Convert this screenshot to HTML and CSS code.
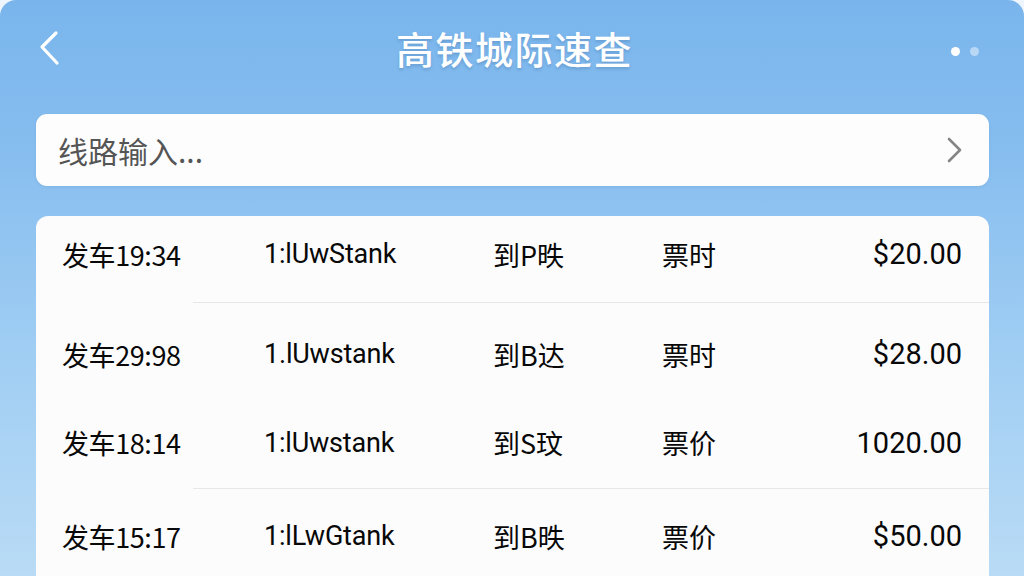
FILE: index.html
```html
<!DOCTYPE html>
<html lang="zh-CN">
<head>
<meta charset="utf-8">
<title>高铁城际速查</title>
<link rel="stylesheet" href="styles.css">
</head>
<body>
<div class="app">
  <header class="topbar">
    <svg class="back" width="24" height="36" viewBox="0 0 24 36"><path d="M18 3 L4 17 L19 33" fill="none" stroke="#fff" stroke-width="3.2" stroke-linecap="round" stroke-linejoin="round"/></svg>
    <h1 class="title">高铁城际速查</h1>
    <div class="dots"><span class="dot"></span><span class="dot dim"></span></div>
  </header>

  <div class="search">
    <span class="search-text">线路输入...</span>
    <svg class="chev" width="18" height="28" viewBox="0 0 18 28"><path d="M4 3 L15 14 L4 25" fill="none" stroke="#858585" stroke-width="2.6" stroke-linecap="round" stroke-linejoin="round"/></svg>
  </div>

  <div class="card">
    <div class="row r1">
      <span class="c1">发车19:34</span><span class="c2">1:lUwStank</span><span class="c3">到P昳</span><span class="c4">票时</span><span class="c5">$20.00</span>
    </div>
    <div class="divider"></div>
    <div class="row r2">
      <span class="c1">发车29:98</span><span class="c2">1.lUwstank</span><span class="c3">到B达</span><span class="c4">票时</span><span class="c5">$28.00</span>
    </div>
    <div class="row r3">
      <span class="c1">发车18:14</span><span class="c2">1:lUwstank</span><span class="c3">到S玟</span><span class="c4">票价</span><span class="c5">1020.00</span>
    </div>
    <div class="divider"></div>
    <div class="row r4">
      <span class="c1">发车15:17</span><span class="c2">1:lLwGtank</span><span class="c3">到B昳</span><span class="c4">票价</span><span class="c5">$50.00</span>
    </div>
  </div>
</div>
</body>
</html>
```
FILE: styles.css
```css
* { box-sizing: border-box; }
html, body { margin: 0; padding: 0; }
body {
  width: 1024px;
  height: 576px;
  overflow: hidden;
  background: #eef5fc;
  font-family: Roboto, "Noto Sans CJK SC", sans-serif;
}
.app {
  height: 576px;
  border-radius: 16px 16px 0 0;
  background: linear-gradient(180deg, #79b5ec 0%, #86bdef 25%, #9fcdf3 60%, #b9dbf5 100%);
  padding: 0 35px 0 36px;
  overflow: hidden;
}
.topbar {
  height: 94px;
  display: flex;
  align-items: center;
  justify-content: space-between;
}
.back { margin-left: 2px; margin-top: 2px; }
.title {
  margin: 0 0 0 16px;
  font-family: "Noto Sans CJK SC", sans-serif;
  font-weight: 500;
  font-size: 38px;
  color: #fff;
  letter-spacing: 1.5px;
  text-shadow: 0 2px 3px rgba(40, 80, 130, 0.25);
  flex: 1;
  text-align: center;
}
.dots { display: flex; gap: 10px; margin-right: 10px; margin-top: 8px; }
.dot { width: 9px; height: 9px; border-radius: 50%; background: #fff; }
.dot.dim { background: rgba(255, 255, 255, 0.45); }

.search {
  margin-top: 20px;
  height: 72px;
  background: #fdfdfd;
  border-radius: 11px;
  display: flex;
  align-items: center;
  justify-content: space-between;
  padding: 0 26px 0 22px;
  box-shadow: 0 1px 3px rgba(60, 100, 150, 0.12);
}
.search-text {
  font-family: "Noto Sans CJK SC", sans-serif;
  font-size: 30px;
  color: #555;
  margin-top: -1px;
}

.card {
  margin-top: 30px;
  background: #fcfcfc;
  border-radius: 12px;
  height: 400px;
}
.row {
  display: grid;
  grid-template-columns: 202px 229px 169px 1fr auto;
  align-items: center;
  padding: 0 27px 0 26px;
  font-size: 27px;
  font-weight: 400;
  color: #080808;
}
.r1 { height: 86px; padding-bottom: 10px; }
.r2 { height: 96px; padding-top: 6px; }
.r3 { height: 89px; padding-bottom: 2px; }
.r4 { height: 96px; padding-bottom: 2px; }
.c1, .c3, .c4 { font-family: "Noto Sans CJK SC", sans-serif; font-size: 27px; }
.c1 { letter-spacing: -0.4px; }
.c2 { letter-spacing: -0.2px; }
.c5 { font-size: 29px; text-align: right; }
.divider {
  height: 1px;
  margin-left: 157px;
  background: #e7e7e7;
}
```
